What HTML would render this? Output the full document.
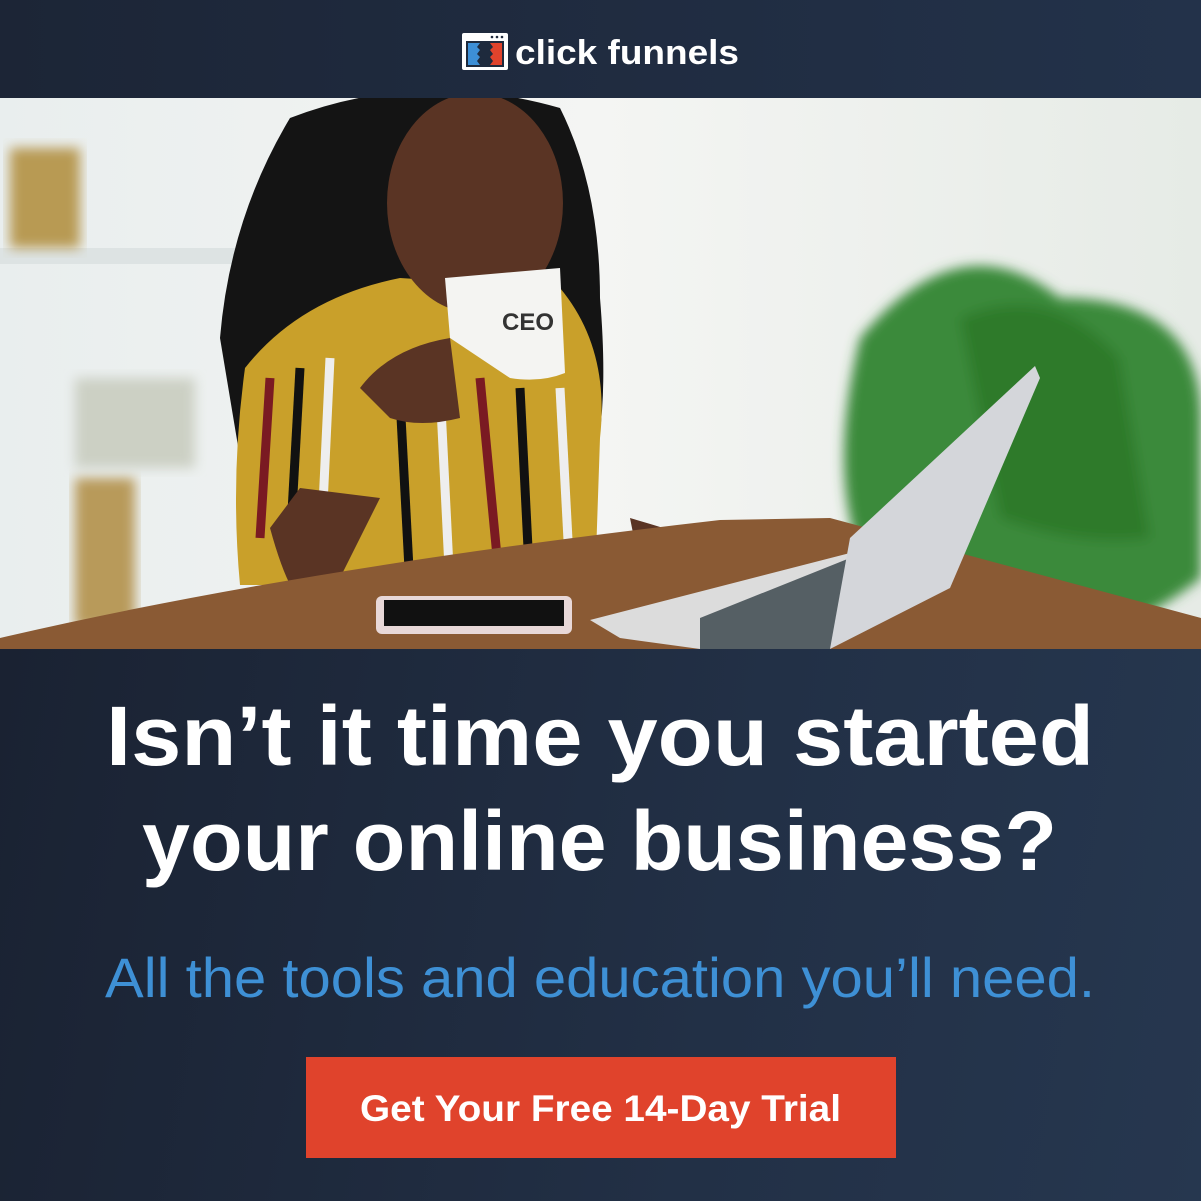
<!DOCTYPE html>
<html><head><meta charset="utf-8"><style>
html,body{margin:0;padding:0;width:1201px;height:1201px;overflow:hidden;background:#1e2737}
body{position:relative;font-family:"Liberation Sans",sans-serif}
.top{position:absolute;left:0;top:0;width:1201px;height:98px;background:linear-gradient(90deg,#1c2536,#23324a)}
.bot{position:absolute;left:0;top:649px;width:1201px;height:552px;background:linear-gradient(100deg,#1a2232 0%,#223046 60%,#26374f 100%)}
.btn{position:absolute;left:306px;top:1057px;width:590px;height:101px;background:#e0432c}
</style></head><body>
<div class="top"></div>
<svg style="position:absolute;left:0;top:0" width="1201" height="98">
 <rect x="462" y="33" width="46" height="37" rx="2" fill="#fff"/>
 <rect x="466" y="41" width="38" height="26" fill="#1e2a3d"/>
 <circle cx="492" cy="37" r="1.3" fill="#1e2a3d"/><circle cx="497" cy="37" r="1.3" fill="#1e2a3d"/><circle cx="502" cy="37" r="1.3" fill="#1e2a3d"/>
 <path d="M468 43h12l-3 4 3 3-3 4 3 3-3 4 3 4h-12z" fill="#3d8fd6"/>
 <path d="M502 43h-12l3 4-3 3 3 4-3 3 3 4-3 4h12z" fill="#e0432c"/>
 <text x="515" y="64" font-family="Liberation Sans,sans-serif" font-weight="bold" font-size="34" fill="#fff" textLength="224" lengthAdjust="spacingAndGlyphs">click funnels</text>
</svg>
<svg style="position:absolute;left:0;top:98px" width="1201" height="551">
 <defs>
  <linearGradient id="bg" x1="0" x2="1"><stop offset="0" stop-color="#e9eeee"/><stop offset=".5" stop-color="#f4f5f3"/><stop offset="1" stop-color="#e6ebe6"/></linearGradient>
  <filter id="b"><feGaussianBlur stdDeviation="6"/></filter>
 </defs>
 <rect width="1201" height="551" fill="url(#bg)"/>
 <rect x="0" y="150" width="240" height="16" fill="#dde3e3"/>
 <rect x="10" y="50" width="70" height="100" fill="#b89a52" filter="url(#b)"/>
 <rect x="75" y="380" width="60" height="150" fill="#b89a5a" filter="url(#b)"/>
 <rect x="75" y="280" width="120" height="90" fill="#ccd0c4" filter="url(#b)"/>
 <g filter="url(#b)"><path d="M860 240 Q960 120 1060 200 Q1200 200 1201 320 L1201 480 Q1100 560 1000 540 L880 500 Q820 400 860 240z" fill="#3b8a3a"/>
 <path d="M960 220 Q1050 180 1120 260 L1150 440 Q1080 450 1000 420z" fill="#2f7a2c"/></g>
 <path d="M220 240 Q230 120 290 20 Q420 -30 560 10 Q600 90 600 200 Q610 320 590 380 L240 360z" fill="#141414"/>
 <path d="M245 270 Q300 200 400 180 L560 190 Q610 250 600 340 L595 487 L240 487 Q230 380 245 270z" fill="#c9a02a"/>
 <g stroke-width="9" fill="none">
  <path d="M270 280 L260 440" stroke="#7a1a22"/><path d="M300 270 L290 450" stroke="#111"/>
  <path d="M330 260 L320 470" stroke="#eee"/><path d="M400 300 L410 490" stroke="#111"/>
  <path d="M440 290 L450 490" stroke="#eee"/><path d="M480 280 L500 490" stroke="#7a1a22"/>
  <path d="M520 290 L530 490" stroke="#111"/><path d="M560 290 L570 480" stroke="#eee"/>
 </g>
 <ellipse cx="475" cy="105" rx="88" ry="110" fill="#5a3424"/>
 <path d="M360 290 Q390 250 450 240 L460 320 Q420 330 390 320z" fill="#5a3424"/>
 <path d="M445 180 L560 170 L565 275 Q540 285 510 280 L450 240z" fill="#f4f4f2"/>
 <text x="502" y="232" font-family="Liberation Sans,sans-serif" font-weight="bold" font-size="24" fill="#333">CEO</text>
 <path d="M270 430 Q300 540 330 500 L380 400 L300 390z" fill="#5a3424"/>
 <path d="M630 420 Q700 440 780 470 L760 500 Q690 480 640 470z" fill="#5a3424"/>
 <path d="M0 551 L0 540 Q300 470 720 422 L830 420 L1201 520 L1201 551z" fill="#8a5a34"/>
 <path d="M590 522 L850 455 L860 520 L700 551 L620 540z" fill="#dcdcdc"/>
 <path d="M700 520 L850 460 L830 551 L700 551z" fill="#555f64"/>
 <path d="M850 440 L1035 268 L1040 280 L950 490 L830 551z" fill="#d4d6da"/>
 <rect x="376" y="498" width="196" height="38" rx="6" fill="#e8d8d8"/>
 <rect x="384" y="502" width="180" height="26" fill="#111"/>
</svg>
<div class="bot"></div>
<svg style="position:absolute;left:0;top:649px" width="1201" height="552">
 <text x="106" y="116" font-family="Liberation Sans,sans-serif" font-weight="bold" font-size="84" fill="#fff" textLength="988" lengthAdjust="spacingAndGlyphs">Isn’t it time you started</text>
 <text x="142" y="221" font-family="Liberation Sans,sans-serif" font-weight="bold" font-size="84" fill="#fff" textLength="915" lengthAdjust="spacingAndGlyphs">your online business?</text>
 <text x="105" y="348" font-family="Liberation Sans,sans-serif" font-size="56" fill="#3e90d5" textLength="990" lengthAdjust="spacingAndGlyphs">All the tools and education you’ll need.</text>
</svg>
<div class="btn"></div>
<svg style="position:absolute;left:0;top:0" width="1201" height="1201">
 <text x="360" y="1121" font-family="Liberation Sans,sans-serif" font-weight="bold" font-size="37" fill="#fff" textLength="481" lengthAdjust="spacingAndGlyphs">Get Your Free 14-Day Trial</text>
</svg>
</body></html>
